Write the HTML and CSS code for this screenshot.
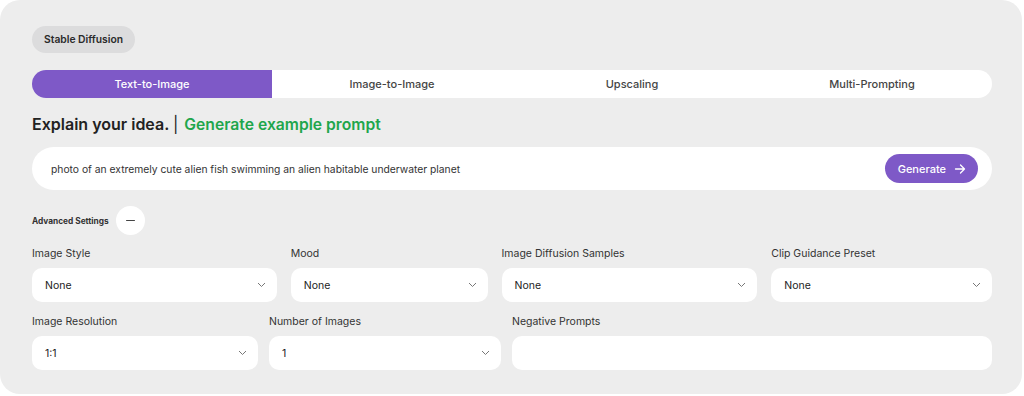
FILE: index.html
```html
<!DOCTYPE html>
<html lang="en">
<head>
  <meta charset="UTF-8">
  <meta name="viewport" content="width=device-width, initial-scale=1.0">
  <title>Stable Diffusion</title>
  <link rel="stylesheet" href="styles.css">
</head>
<body>

<div class="card">
  <span class="badge">Stable Diffusion</span>

  <div class="tabs">
    <div class="tab active">Text-to-Image</div>
    <div class="tab">Image-to-Image</div>
    <div class="tab">Upscaling</div>
    <div class="tab">Multi-Prompting</div>
  </div>

  <h2 class="idea">Explain your idea. <span class="pipe">|</span> <span class="example">Generate example prompt</span></h2>

  <div class="prompt-bar">
    <span class="prompt-text">photo of an extremely cute alien fish swimming an alien habitable underwater planet</span>
    <button class="generate-btn">Generate
      <svg width="12" height="12" viewBox="0 0 12 12"><path d="M1.5 6h9M6.5 2l4 4-4 4" fill="none" stroke="#fff" stroke-width="1.3" stroke-linecap="round" stroke-linejoin="round"/></svg>
    </button>
  </div>

  <div class="advanced">
    <span>Advanced Settings</span>
    <button class="toggle-btn"><span class="minus"></span></button>
  </div>

  <!-- 1段目 -->
  <div class="row row-one">
    <div class="field">
      <label>Image Style</label>
      <div class="select">None <svg class="chev" width="9" height="6" viewBox="0 0 9 6"><path d="M1 1l3.5 3.5L8 1" fill="none" stroke="#777" stroke-width="1"/></svg></div>
    </div>
    <div class="field">
      <label>Mood</label>
      <div class="select">None <svg class="chev" width="9" height="6" viewBox="0 0 9 6"><path d="M1 1l3.5 3.5L8 1" fill="none" stroke="#777" stroke-width="1"/></svg></div>
    </div>
    <div class="field">
      <label>Image Diffusion Samples</label>
      <div class="select">None <svg class="chev" width="9" height="6" viewBox="0 0 9 6"><path d="M1 1l3.5 3.5L8 1" fill="none" stroke="#777" stroke-width="1"/></svg></div>
    </div>
    <div class="field">
      <label>Clip Guidance Preset</label>
      <div class="select">None <svg class="chev" width="9" height="6" viewBox="0 0 9 6"><path d="M1 1l3.5 3.5L8 1" fill="none" stroke="#777" stroke-width="1"/></svg></div>
    </div>
  </div>

  <!-- 2段目 -->
  <div class="row row-two">
    <div class="field">
      <label>Image Resolution</label>
      <div class="select">1:1 <svg class="chev" width="9" height="6" viewBox="0 0 9 6"><path d="M1 1l3.5 3.5L8 1" fill="none" stroke="#777" stroke-width="1"/></svg></div>
    </div>
    <div class="field">
      <label>Number of Images</label>
      <div class="select">1 <svg class="chev" width="9" height="6" viewBox="0 0 9 6"><path d="M1 1l3.5 3.5L8 1" fill="none" stroke="#777" stroke-width="1"/></svg></div>
    </div>
    <div class="field">
      <label>Negative Prompts</label>
      <div class="select"></div>
    </div>
  </div>
</div>

</body>
</html>
```

FILE: styles.css
```css
body {
  margin: 0;
  background: #fff;
  font-family: Inter, 'Liberation Sans', sans-serif;
  color: #222;
}
.card {
  width: 1022px;
  height: 394px;
  box-sizing: border-box;
  background: #ededed;
  border-radius: 20px;
  padding: 26px 32px 0;
}
.badge {
  display: inline-block;
  height: 27px;
  line-height: 27px;
  padding: 0 12px;
  border-radius: 14px;
  background: #dcdcdd;
  font-size: 10.3px;
  font-weight: 600;
  color: #2a2a2a;
}
.tabs {
  display: grid;
  grid-template-columns: repeat(4, 1fr);
  margin-top: 17px;
  width: 960px;
  height: 28px;
  background: #fff;
  border-radius: 14px;
}
.tab {
  display: flex;
  align-items: center;
  justify-content: center;
  font-size: 11px;
  font-weight: 500;
  color: #444;
}
.tab.active {
  background: #7e59c7;
  color: #fff;
  border-radius: 14px 0 0 14px;
}
.idea {
  margin: 17px 0 0;
  height: 18px;
  line-height: 18px;
  font-size: 16px;
  font-weight: 600;
  color: #222;
}
.pipe {
  font-weight: 400;
}
.example {
  color: #1fa64c;
  font-size: 15.7px;
  margin-left: 2px;
}
.prompt-bar {
  display: flex;
  align-items: center;
  justify-content: space-between;
  margin-top: 14px;
  width: 960px;
  height: 43px;
  box-sizing: border-box;
  padding: 0 14px 0 19px;
  background: #fff;
  border-radius: 22px;
}
.prompt-text {
  font-size: 10.3px;
  color: #333;
}
.generate-btn {
  display: flex;
  align-items: center;
  gap: 8px;
  height: 29px;
  padding: 0 12px 0 13px;
  border: none;
  border-radius: 15px;
  background: #7e59c7;
  color: #fff;
  font-family: inherit;
  font-size: 11px;
  font-weight: 500;
}
.advanced {
  display: flex;
  align-items: center;
  gap: 7px;
  margin-top: 16px;
  height: 29px;
  font-size: 8.3px;
  font-weight: 700;
  color: #333;
}
.toggle-btn {
  display: flex;
  align-items: center;
  justify-content: center;
  width: 29px;
  height: 29px;
  padding: 0;
  border: none;
  border-radius: 50%;
  background: #fff;
}
.minus {
  width: 9px;
  height: 1.5px;
  background: #444;
  border-radius: 1px;
}
.row {
  display: grid;
  width: 960px;
}
.row-one {
  grid-template-columns: 245fr 197fr 256fr 221fr;
  gap: 14px;
  margin-top: 12px;
}
.row-two {
  grid-template-columns: 226fr 232fr 480fr;
  gap: 11px;
  margin-top: 13px;
}
.field {
  display: flex;
  flex-direction: column;
  gap: 7px;
}
.field label {
  line-height: 14px;
  font-size: 10.5px;
  font-weight: 400;
  color: #333;
}
.select {
  display: flex;
  align-items: center;
  justify-content: space-between;
  height: 34px;
  box-sizing: border-box;
  padding: 0 11px 0 13px;
  background: #fff;
  border-radius: 10px;
  font-size: 10.5px;
  color: #222;
}
```
